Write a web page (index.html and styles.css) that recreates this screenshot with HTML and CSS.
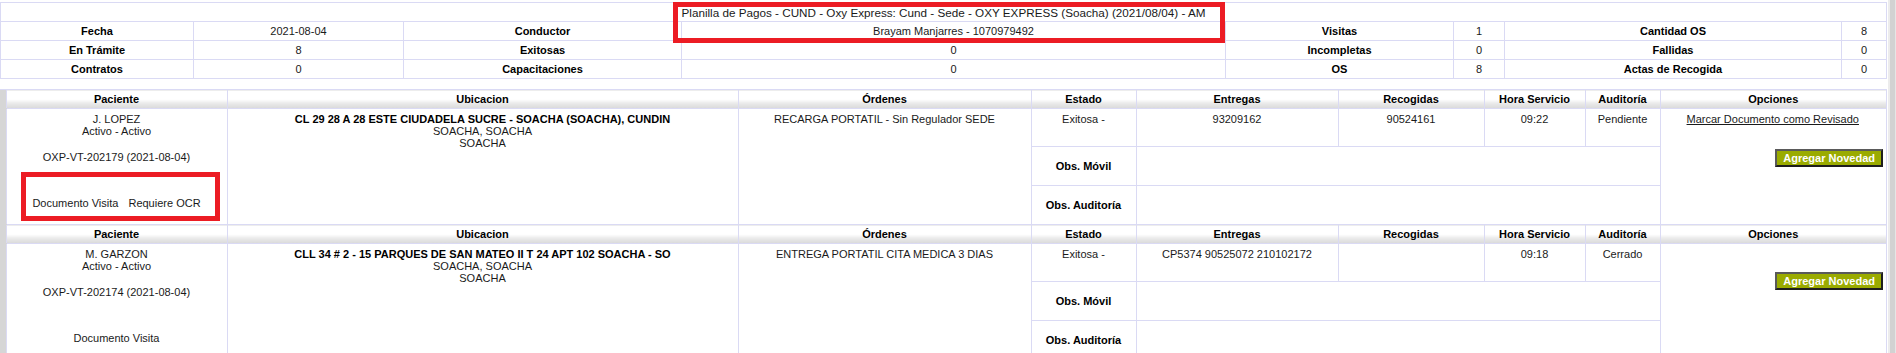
FILE: index.html
```html
<!DOCTYPE html>
<html lang="es">
<head>
    <meta charset="UTF-8">
    <title>Planilla de Pagos</title>
    <link rel="stylesheet" href="styles.css">
</head>
<body>
<div id="frame">
    <div id="content">
        <table class="summary">
            <colgroup>
                <col style="width:193px">
                <col style="width:210px">
                <col style="width:278px">
                <col style="width:544px">
                <col style="width:228px">
                <col style="width:51px">
                <col style="width:337px">
                <col>
            </colgroup>
            <tr>
                <td colspan="8" class="title">Planilla de Pagos - CUND - Oxy Express: Cund - Sede - OXY EXPRESS (Soacha) (2021/08/04) - AM</td>
            </tr>
            <tr>
                <th>Fecha</th><td>2021-08-04</td>
                <th>Conductor</th><td>Brayam Manjarres - 1070979492</td>
                <th>Visitas</th><td>1</td>
                <th>Cantidad OS</th><td>8</td>
            </tr>
            <tr>
                <th>En Trámite</th><td>8</td>
                <th>Exitosas</th><td>0</td>
                <th>Incompletas</th><td>0</td>
                <th>Fallidas</th><td>0</td>
            </tr>
            <tr>
                <th>Contratos</th><td>0</td>
                <th>Capacitaciones</th><td>0</td>
                <th>OS</th><td>8</td>
                <th>Actas de Recogida</th><td>0</td>
            </tr>
        </table>

        <table class="visits">
            <colgroup>
                <col style="width:6px">
                <col style="width:221px">
                <col style="width:511px">
                <col style="width:293px">
                <col style="width:105px">
                <col style="width:202px">
                <col style="width:146px">
                <col style="width:101px">
                <col style="width:75px">
                <col>
            </colgroup>
            <tr class="head">
                <td class="gutter"></td>
                <th>Paciente</th><th>Ubicacion</th><th>Órdenes</th><th>Estado</th>
                <th>Entregas</th><th>Recogidas</th><th>Hora Servicio</th><th>Auditoría</th><th>Opciones</th>
            </tr>
            <tr class="r1">
                <td class="gutter" rowspan="3"></td>
                <td class="patient" rowspan="3">
                    <div>J. LOPEZ</div>
                    <div>Activo - Activo</div>
                    <div class="code">OXP-VT-202179 (2021-08-04)</div>
                    <div class="docs"><span>Documento Visita</span><span>Requiere OCR</span></div>
                </td>
                <td class="address" rowspan="3">
                    <b>CL 29 28 A 28 ESTE CIUDADELA SUCRE - SOACHA (SOACHA), CUNDIN</b>
                    <div>SOACHA, SOACHA</div>
                    <div>SOACHA</div>
                </td>
                <td class="top" rowspan="3">RECARGA PORTATIL - Sin Regulador SEDE</td>
                <td>Exitosa -</td>
                <td>93209162</td>
                <td>90524161</td>
                <td>09:22</td>
                <td>Pendiente</td>
                <td class="options" rowspan="3">
                    <div><a href="#">Marcar Documento como Revisado</a></div>
                    <div class="btn-row"><span class="btn">Agregar Novedad</span></div>
                </td>
            </tr>
            <tr class="r2">
                <td class="label">Obs. Móvil</td><td colspan="4"></td>
            </tr>
            <tr class="r3">
                <td class="label">Obs. Auditoría</td><td colspan="4"></td>
            </tr>

            <tr class="head">
                <td class="gutter"></td>
                <th>Paciente</th><th>Ubicacion</th><th>Órdenes</th><th>Estado</th>
                <th>Entregas</th><th>Recogidas</th><th>Hora Servicio</th><th>Auditoría</th><th>Opciones</th>
            </tr>
            <tr class="r1">
                <td class="gutter" rowspan="3"></td>
                <td class="patient" rowspan="3">
                    <div>M. GARZON</div>
                    <div>Activo - Activo</div>
                    <div class="code">OXP-VT-202174 (2021-08-04)</div>
                    <div class="docs"><span>Documento Visita</span></div>
                </td>
                <td class="address" rowspan="3">
                    <b>CLL 34 # 2 - 15 PARQUES DE SAN MATEO II T 24 APT 102 SOACHA - SO</b>
                    <div>SOACHA, SOACHA</div>
                    <div>SOACHA</div>
                </td>
                <td class="top" rowspan="3">ENTREGA PORTATIL CITA MEDICA 3 DIAS</td>
                <td>Exitosa -</td>
                <td>CP5374 90525072 210102172</td>
                <td></td>
                <td>09:18</td>
                <td>Cerrado</td>
                <td class="options" rowspan="3">
                    <div class="btn-row"><span class="btn">Agregar Novedad</span></div>
                </td>
            </tr>
            <tr class="r2">
                <td class="label">Obs. Móvil</td><td colspan="4"></td>
            </tr>
            <tr class="r3">
                <td class="label">Obs. Auditoría</td><td colspan="4"></td>
            </tr>
        </table>
    </div>
    <div id="edge"></div>
</div>

<div class="mark mark-title"></div>
<div class="mark mark-ocr"></div>
</body>
</html>
```

FILE: styles.css
```css
*{
    margin: 0;
    padding: 0;
}
body{
    font-family: "Liberation Sans", Arial, sans-serif;
    font-size: 11px;
    color: #1a1a1a;
    background: #fff;
    overflow: hidden;
}
a{
    color: #1a1a1a;
    text-decoration: underline;
}
#frame{
    display: flex;
    height: 353px;
}
#content{
    width: 1888px;
}
#edge{
    width: 8px;
    background: linear-gradient(to right, #ececec 0, #ececec 2px, #d2d2d2 2px, #d2d2d2 7px, #e6e6e6 7px);
}
table{
    border-collapse: collapse;
    table-layout: fixed;
    width: 1887px;
}
td, th{
    border: 1px solid #dadaf4;
    text-align: center;
    padding: 0 2px;
    white-space: nowrap;
    overflow: hidden;
}
th{
    font-weight: bold;
    color: #000;
}

/* summary */
.summary{
    margin-top: 2px;
}
.summary td, .summary th{
    height: 18px;
    line-height: 13px;
}
.summary .title{
    font-size: 11.7px;
}

/* visits */
.visits{
    margin-top: 10px;
}
.visits .head th{
    height: 18px;
    line-height: 13px;
    background: linear-gradient(to bottom, #fff 0, #fff 50%, #ebebeb 70%, #d9d9d9 100%);
}
.visits .gutter{
    background: #d6d6d6;
    border-left: 0;
    border-top-color: #d6d6d6;
    border-bottom-color: #d6d6d6;
    padding: 0;
}
.visits .head .gutter{
    border-top-color: #dadaf4;
}
.visits .r1 td{
    height: 33px;
    padding-top: 4px;
    line-height: 12px;
    vertical-align: top;
}
.visits .r2 td{
    height: 38px;
}
.visits .r3 td{
    height: 38px;
}
.visits .label{
    font-weight: bold;
    color: #000;
    vertical-align: middle;
}
.patient .code{
    margin-top: 14px;
}
.patient .docs{
    margin-top: 34px;
}
.patient .docs span{
    margin: 0 5px;
}
.address b{
    color: #000;
}
.options{
    padding-right: 3px;
}
.btn-row{
    margin-top: 24px;
    text-align: right;
}
.btn{
    display: inline-block;
    padding: 0 6px;
    line-height: 14px;
    font-weight: bold;
    color: #fff;
    background: #9aab00;
    border: 2px solid;
    border-color: #5a5a5a #1e1e1e #1e1e1e #5a5a5a;
}

/* annotation frames */
.mark{
    position: absolute;
    border: 5px solid #ec1c24;
}
.mark-title{
    left: 673px;
    top: 2px;
    width: 542px;
    height: 31px;
}
.mark-ocr{
    left: 21px;
    top: 172px;
    width: 189px;
    height: 39px;
}
```
